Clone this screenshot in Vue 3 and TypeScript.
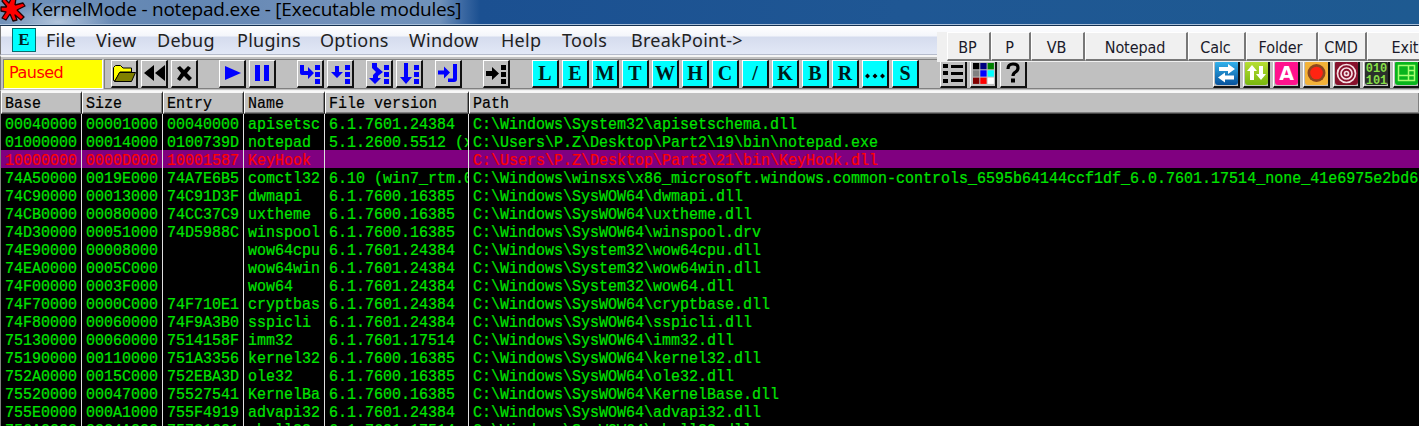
<script setup lang="ts">
interface ModuleRow {
  base: string
  size: string
  entry: string
  name: string
  version: string
  path: string
  selected?: boolean
}

const row = (base: string, size: string, entry: string, name: string, version: string, path: string, selected = false): ModuleRow =>
  ({ base, size, entry, name, version, path, selected })

const rows: ModuleRow[] = [
  row('00040000', '00001000', '00040000', 'apisetsc', '6.1.7601.24384', 'C:\\Windows\\System32\\apisetschema.dll'),
  row('01000000', '00014000', '0100739D', 'notepad', '5.1.2600.5512 (x', 'C:\\Users\\P.Z\\Desktop\\Part2\\19\\bin\\notepad.exe'),
  row('10000000', '0000D000', '10001587', 'KeyHook', '', 'C:\\Users\\P.Z\\Desktop\\Part3\\21\\bin\\KeyHook.dll', true),
  row('74A50000', '0019E000', '74A7E6B5', 'comctl32', '6.10 (win7_rtm.0', 'C:\\Windows\\winsxs\\x86_microsoft.windows.common-controls_6595b64144ccf1df_6.0.7601.17514_none_41e6975e2bd6'),
  row('74C90000', '00013000', '74C91D3F', 'dwmapi', '6.1.7600.16385', 'C:\\Windows\\SysWOW64\\dwmapi.dll'),
  row('74CB0000', '00080000', '74CC37C9', 'uxtheme', '6.1.7600.16385', 'C:\\Windows\\SysWOW64\\uxtheme.dll'),
  row('74D30000', '00051000', '74D5988C', 'winspool', '6.1.7600.16385', 'C:\\Windows\\SysWOW64\\winspool.drv'),
  row('74E90000', '00008000', '', 'wow64cpu', '6.1.7601.24384', 'C:\\Windows\\System32\\wow64cpu.dll'),
  row('74EA0000', '0005C000', '', 'wow64win', '6.1.7601.24384', 'C:\\Windows\\System32\\wow64win.dll'),
  row('74F00000', '0003F000', '', 'wow64', '6.1.7601.24384', 'C:\\Windows\\System32\\wow64.dll'),
  row('74F70000', '0000C000', '74F710E1', 'cryptbas', '6.1.7601.24384', 'C:\\Windows\\SysWOW64\\cryptbase.dll'),
  row('74F80000', '00060000', '74F9A3B0', 'sspicli', '6.1.7601.24384', 'C:\\Windows\\SysWOW64\\sspicli.dll'),
  row('75130000', '00060000', '7514158F', 'imm32', '6.1.7601.17514', 'C:\\Windows\\SysWOW64\\imm32.dll'),
  row('75190000', '00110000', '751A3356', 'kernel32', '6.1.7600.16385', 'C:\\Windows\\SysWOW64\\kernel32.dll'),
  row('752A0000', '0015C000', '752EBA3D', 'ole32', '6.1.7600.16385', 'C:\\Windows\\SysWOW64\\ole32.dll'),
  row('75520000', '00047000', '75527541', 'KernelBa', '6.1.7600.16385', 'C:\\Windows\\SysWOW64\\KernelBase.dll'),
  row('755E0000', '000A1000', '755F4919', 'advapi32', '6.1.7601.24384', 'C:\\Windows\\SysWOW64\\advapi32.dll'),
  row('756A0000', '00C4A000', '75721601', 'shell32', '6.1.7601.17514', 'C:\\Windows\\SysWOW64\\shell32.dll'),
]

const keys = ['base', 'size', 'entry', 'name', 'version', 'path'] as const
const headers = ['Base', 'Size', 'Entry', 'Name', 'File version', 'Path']
const menu = ['File', 'View', 'Debug', 'Plugins', 'Options', 'Window', 'Help', 'Tools', 'BreakPoint->']
const letters = ['L', 'E', 'M', 'T', 'W', 'H', 'C', '/', 'K', 'B', 'R', '…', 'S']
const launch = ['BP', 'P', 'VB', 'Notepad', 'Calc', 'Folder', 'CMD', 'Exit']

const dots = 'M17 4h5v5h-5zM17 11h5v5h-5zM17 18h5v5h-5z'
const groups: { id: string; icons: { d: string; color: string }[] }[] = [
  {
    id: 'file',
    icons: [
      { d: '', color: '#000' },
      { d: 'M12 4v16L2 12zM23 4v16L13 12z', color: '#000' },
      { d: 'M5 7L8 5L12 9L16 5L19 7L15 12L20 17L17 20L12 15L8 20L5 18L9 12z', color: '#000' },
    ],
  },
  {
    id: 'run',
    icons: [
      { d: 'M5 5L21 12L5 19z', color: '#00f' },
      { d: 'M5 4h5v16h-5zM14 4h5v16h-5z', color: '#00f' },
    ],
  },
  {
    id: 'step',
    icons: [
      { d: 'M2 4h4v6h4V6l6 6l-6 6v-4H4q-2 0-2-2z' + dots, color: '#00f' },
      { d: 'M7 5h4v6h4l-6 6l-6-6h4z' + dots, color: '#00f' },
    ],
  },
  {
    id: 'trace',
    icons: [
      { d: 'M5 2h5v4l6 5l-5 4v2h3l-6 6l-6-6h4v-3l3-3l-4-4z' + dots, color: '#00f' },
      { d: 'M7 2h4v14h4l-6 7l-6-7h4z' + dots, color: '#00f' },
    ],
  },
  { id: 'ret', icons: [{ d: 'M2 9.500h6V5.500l6 6l-6 6v-4H2zM17 3h4v15q0 3-3 3h-6v-3.500h5z', color: '#00f' }] },
  { id: 'goto', icons: [{ d: 'M2 10h6V6l7 6.500l-7 6.500v-4H2z' + dots, color: '#000' }] },
]
const palette = ['#000', '#000080', '#008000', '#808080', '#00f', '#0ff', '#800000', '#f00', '#fff']
const plugins = ['swap', 'sort', 'text', 'record', 'target', 'binary', 'layout']
</script>

<template>
  <div class="window">
    <header class="title">
      <svg class="splat" width="26" height="22" viewBox="0 0 26 22">
        <path d="M4-2L9 3L12-3L16-2L15 5L23 3L25 6L17 10L24 17L21 20L15 15L17 20L13 21L10 14L6 20L2 18L6 12L1 11L1 7L7 7L2 1z" fill="#f00" stroke="#200" stroke-width="1.300" stroke-linejoin="round" />
        <circle cx="11.500" cy="9" r="5" fill="#f00" />
      </svg>
      <span class="title-text">KernelMode - notepad.exe - [Executable modules]</span>
    </header>

    <nav class="menu">
      <span class="doc">E</span>
      <span v-for="m in menu" :key="m" class="menu-item">{{ m }}</span>
    </nav>

    <div class="toolbar">
      <div class="status">Paused</div>
      <div class="tools">
        <div v-for="g in groups" :key="g.id" class="group" :class="g.id">
          <button v-for="(ic, i) in g.icons" :key="i" class="tool">
            <svg width="25" height="25" viewBox="0 0 25 25">
              <path v-if="ic.d" :d="ic.d" :fill="ic.color" />
              <g v-else stroke="#000" stroke-width="1" stroke-linejoin="round">
                <path d="M1.500 19.500V6.500L3.500 4.500H8.500L11 7H19.500V11H8L3 20z" fill="#ff0" />
                <path d="M2.500 20.500L7.500 11.500H23.500L19.500 20.500z" fill="#808000" />
              </g>
            </svg>
          </button>
        </div>
        <div class="group letters">
          <button v-for="l in letters" :key="l" class="tool cyan">
            <svg v-if="l === '…'" width="25" height="25" viewBox="0 0 25 25"><path d="M2 15l2.500-2.500L7 15l-2.500 2.500zM9.500 15l2.500-2.500l2.500 2.500l-2.500 2.500zM17 15l2.500-2.500L22 15l-2.500 2.500z" /></svg>
            <span v-else>{{ l }}</span>
          </button>
        </div>
        <div class="group views">
          <button class="tool">
            <svg width="25" height="25" viewBox="0 0 25 25"><path d="M2 3h5v4H2zM10 4h12v3H10zM2 10h5v4H2zM10 11h12v3H10zM2 18h5v4H2zM10 18h12v3H10z" /></svg>
          </button>
          <button class="tool">
            <svg width="25" height="25" viewBox="0 0 25 25">
              <rect v-for="(c, i) in palette" :key="i" :x="2 + (i % 3) * 7.3" :y="2 + Math.floor(i / 3) * 7.3" width="6.300" height="6.300" :fill="c" />
            </svg>
          </button>
          <button class="tool">
            <svg width="25" height="25" viewBox="0 0 25 25"><path d="M7 8q0-5 5-5t5 4q0 2.500-2.500 4q-2.500 1.500-2.500 4" fill="none" stroke="#000" stroke-width="3.200" /><path d="M10 17.500h4v4h-4z" /></svg>
          </button>
        </div>
        <div class="group plugins">
          <button v-for="p in plugins" :key="p" class="tool">
            <svg width="25" height="25" viewBox="0 0 25 25">
              <defs>
                <linearGradient id="blue" x2="0" y2="1"><stop stop-color="#35b5ee" /><stop offset="1" stop-color="#07529c" /></linearGradient>
                <linearGradient id="lime" x2="0" y2="1"><stop stop-color="#b9df35" /><stop offset="1" stop-color="#79b80e" /></linearGradient>
              </defs>
              <g v-if="p === 'swap'"><rect x="1" width="23" height="24" rx="3" fill="url(#blue)" /><path d="M5 6h9V3l7 5l-7 5v-3H5zM20 14.500h-9v-3l-7 5l7 5v-3h9z" fill="#fff" /></g>
              <g v-else-if="p === 'sort'"><rect x="1" width="23" height="24" rx="3" fill="url(#lime)" /><path d="M6 19V10H3l5-6l5 6h-3v9zM15 5v8h-3l5 6l5-6h-3V5z" fill="#fff" /></g>
              <g v-else-if="p === 'text'"><rect x="1" width="23" height="24" rx="3" fill="#ff128d" /><text x="12.500" y="19" text-anchor="middle" class="glyph-a">A</text></g>
              <g v-else-if="p === 'record'"><rect x="1" width="23" height="24" rx="3" fill="#f3b238" /><circle cx="12.500" cy="12" r="9" fill="#8d461f" /><circle cx="12.500" cy="12" r="6.300" fill="#ff2412" /></g>
              <g v-else-if="p === 'target'"><rect x="1" width="23" height="24" rx="3" fill="#87112c" /><g fill="none" stroke="#f5dfe3" stroke-width="1.700"><circle cx="12.500" cy="12.500" r="9" /><circle cx="12.500" cy="12.500" r="5.500" /><circle cx="12.500" cy="12.500" r="2" /></g></g>
              <g v-else-if="p === 'binary'"><rect x="1" width="23" height="24" rx="3" fill="#2b302b" /><text x="12.500" y="11" text-anchor="middle" class="glyph-b">010</text><text x="12.500" y="22.500" text-anchor="middle" class="glyph-b">101</text></g>
              <g v-else><rect x="1" width="23" height="24" rx="3" fill="#08b51c" /><path d="M4.500 4.500h16v15h-16zM4.500 14.500h16M14.500 4.500v15M14.500 9.500h6" fill="none" stroke="#a8ff72" stroke-width="1.500" /></g>
            </svg>
          </button>
        </div>
      </div>
    </div>

    <section class="modules">
      <div class="grid head">
        <div v-for="h in headers" :key="h" class="hcell"><span class="mono">{{ h }}</span></div>
      </div>
      <div v-for="r in rows" :key="r.base" class="grid line" :class="{ selected: r.selected }">
        <div v-for="k in keys" :key="k" class="cell"><span class="mono">{{ r[k] }}</span></div>
      </div>
    </section>

    <aside class="launcher">
      <button v-for="b in launch" :key="b" class="launch">{{ b }}</button>
    </aside>
  </div>
</template>

<style>
body { margin: 0; overflow: hidden; }
</style>

<style scoped>
* { box-sizing: border-box; }
button { margin: 0; padding: 0; font: inherit; color: inherit; border-radius: 0; }
svg { display: block; }
.window {
  position: relative;
  width: 1419px;
  height: 426px;
  overflow: hidden;
  display: flex;
  flex-direction: column;
  background: #c0c0c0;
  font-family: "Noto Sans", sans-serif;
}
.title {
  flex: none;
  height: 26px;
  display: flex;
  border-bottom: 1px solid #14304f;
  box-shadow: inset 0 -1px #a9c0da;
  background:
    radial-gradient(ellipse 55px 20px at 58px 22px, #c3d3e5cc, transparent),
    linear-gradient(90deg, #7191b8 0, #6286b3 180px, #7190b9 330px, #6f91ba 440px, #3b68a2 463px, #1b5091 480px, #1f5794 900px, #1e5a91 100%);
}
.splat { flex: none; }
.title-text {
  margin-left: 5px;
  line-height: 18px;
  font-family: "Open Sans", sans-serif;
  font-size: 19px;
  letter-spacing: -0.23px;
  white-space: nowrap;
  color: #000;
}
.menu {
  flex: none;
  height: 29px;
  display: grid;
  grid-template-columns: 34px 50px 61px 80px 83px 89px 92px 61px 69px 120px;
  padding-left: 11px;
  border-bottom: 1px solid #b6bccc;
  border-left: 1px solid #777;
  background: linear-gradient(#fff 0, #f4f6fb 35%, #d5dcee 40%, #e2e8f6 100%);
}
.doc {
  width: 24px;
  height: 24px;
  margin-top: 2px;
  border: 1px solid #076c6c;
  background: #0ff;
  color: #002424;
  font: bold 17px/22px "Liberation Serif", serif;
  text-align: center;
}
.menu-item { font-size: 18px; line-height: 29px; color: #222; white-space: nowrap; letter-spacing: 0.25px; }
.toolbar {
  flex: none;
  height: 36px;
  display: flex;
  padding: 2px 0 2px 2px;
  border-top: 2px solid #f5f5f5;
  border-bottom: 1px solid #f0f0f0;
  border-left: 1px solid #777;
  background: #c0c0c0;
}
.status {
  flex: none;
  width: 100px;
  height: 30px;
  border: 1px solid #808080;
  border-right-color: #fff;
  border-bottom-color: #fff;
  background: #ff0;
  color: #f00;
  font: 16px/26px "DejaVu Sans", sans-serif;
  letter-spacing: -0.5px;
  padding-left: 5px;
}
.tools {
  flex: 1;
  display: flex;
  height: 30px;
  margin-left: 1px;
  border-top: 1px solid #808080;
  border-left: 1px solid #808080;
  border-bottom: 1px solid #808080;
  padding-left: 6px;
}
.group { flex: none; display: flex; gap: 3px; }
.run { margin-left: 21px; }
.step { margin-left: 21px; }
.trace { margin-left: 12px; }
.ret { margin-left: 12px; }
.goto { margin-left: 21px; }
.letters { margin-left: 22px; }
.views { margin-left: 21px; }
.plugins { margin-left: 186px; }
.tool {
  flex: none;
  width: 27px;
  height: 28px;
  overflow: hidden;
  border: 1px solid #fff;
  border-right: 2px solid #111;
  border-bottom: 2px solid #111;
  background: #c0c0c0;
}
.cyan { background: #0ff; color: #001a1a; font: bold 20px/25px "Liberation Serif", serif; }
.glyph-a { font: bold 19px "DejaVu Sans", sans-serif; fill: #fff; }
.glyph-b { font: bold 12px "Liberation Mono", monospace; fill: #86df48; }
.modules { flex: 1; border-left: 1px solid #808080; background: #000; overflow: hidden; }
.grid { display: grid; grid-template-columns: 81px 81px 81px 81px 144px 1fr; }
.head { height: 23px; background: #c0c0c0; color: #000; }
.hcell {
  border-left: 1px solid #fff;
  border-top: 2px solid #f8f8f8;
  border-right: 1px solid #222;
  border-bottom: 1px solid #444;
  box-shadow: inset -1px -1px #808080;
  padding-left: 3px;
}
.line { height: 18px; color: #00e400; }
.selected { background: #800080; color: #f00; }
.cell { overflow-x: clip; overflow-y: visible; padding-left: 4px; height: 18px; border-right: 1px solid #e0e0e0; }
.cell:last-child, .hcell:last-child { border-right: 0; }
.mono {
  display: block;
  height: 18px;
  line-height: 19px;
  white-space: pre;
  font-family: "Liberation Mono", monospace;
  font-size: 15px;
  transform: translateY(1px) scaleY(1.14);
  -webkit-text-stroke: 0.200px currentColor;
}
.head .mono { line-height: 20px; transform: translateY(1px) scaleY(1.14); }
.launcher {
  position: absolute;
  left: 937px;
  top: 32px;
  width: 482px;
  height: 30px;
  overflow: hidden;
  display: grid;
  grid-template-columns: 44px 40px 54px 103px 58px 72px 49px 79px;
  padding-left: 10px;
  background: #f0f0f0;
}
.launch {
  height: 29px;
  padding: 3px 2px 0 0;
  border: 1px solid #fff;
  border-right: 2px solid #777;
  border-bottom: 2px solid #777;
  background: #f0f0f0;
  color: #1a1a2a;
  font: 16px/23px "DejaVu Sans Condensed", "DejaVu Sans", sans-serif;
  letter-spacing: -0.1px;
}
</style>
